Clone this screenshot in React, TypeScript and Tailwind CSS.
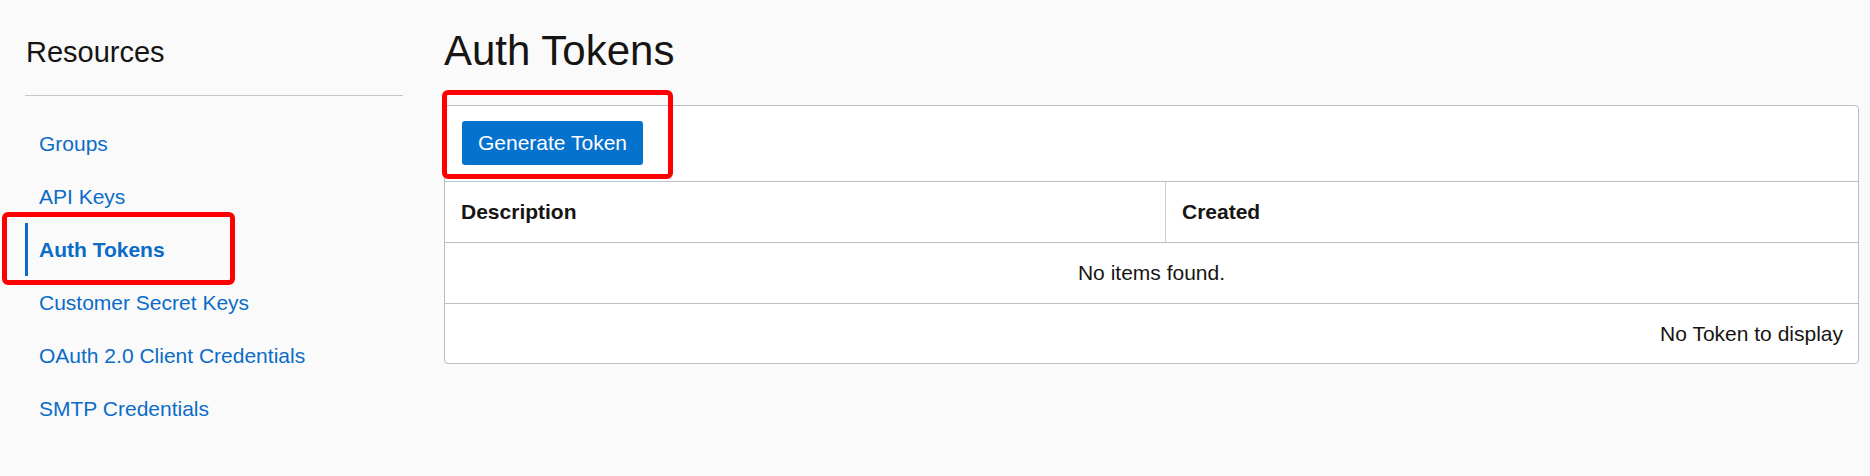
import React from "react";

const links = [
  "Groups",
  "API Keys",
  "Auth Tokens",
  "Customer Secret Keys",
  "OAuth 2.0 Client Credentials",
  "SMTP Credentials",
];

export default function App() {
  return (
    <div
      className="flex h-[476px] w-[1870px] bg-[#fafafa] text-[#161513]"
      style={{ fontFamily: '"Liberation Sans", Arial, sans-serif' }}
    >
      <aside className="w-[444px] shrink-0 pl-[25px] pr-[41px]">
        <h2 className="mt-[38px] h-[29px] pl-[1px] text-[29px] leading-[29px] font-normal">
          Resources
        </h2>
        <div className="mt-[28px] h-px bg-[#c4c8ce]" />
        <nav className="mt-[21px] flex flex-col">
          {links.map((l) => {
            const active = l === "Auth Tokens";
            return (
              <div
                key={l}
                className={
                  active
                    ? "relative h-[53px] border-l-[3px] border-[#0a6cc8] pl-[11px] text-[21px] leading-[54px] font-bold text-[#0a6cc8]"
                    : "relative h-[53px] border-l-[3px] border-transparent pl-[11px] text-[21px] leading-[54px] text-[#0a6cc8]"
                }
              >
                {l}
                {active && (
                  <div className="absolute left-[-26px] top-[-11px] h-[73px] w-[233px] rounded-[6px] border-[5px] border-[#ff0000]" />
                )}
              </div>
            );
          })}
        </nav>
      </aside>

      <main className="flex-1 pr-[11px]">
        <h1 className="mt-[30px] h-[41px] text-[42px] leading-[41px] font-normal">
          Auth Tokens
        </h1>
        <div className="relative mt-[34px] rounded-[4px] border border-[#b9bec6] bg-white">
          <div className="absolute left-[-3px] top-[-16px] h-[89px] w-[231px] rounded-[6px] border-[5px] border-[#ff0000]" />
          <div className="px-[17px] pt-[15px] pb-[16px]">
            <button className="h-[44px] w-[181px] rounded-[3px] bg-[#0572ce] text-[21px] text-white">
              Generate Token
            </button>
          </div>
          <div className="flex h-[61px] border-t border-[#b9bec6] text-[21px] font-bold">
            <div className="flex w-[721px] items-center border-r border-[#c9ccd1] pl-[16px]">
              Description
            </div>
            <div className="flex flex-1 items-center pl-[16px]">Created</div>
          </div>
          <div className="flex h-[61px] items-center justify-center border-t border-[#b9bec6] text-[21px]">
            No items found.
          </div>
          <div className="flex h-[60px] items-center justify-end border-t border-[#b9bec6] pr-[15px] text-[21px]">
            No Token to display
          </div>
        </div>
      </main>
    </div>
  );
}
